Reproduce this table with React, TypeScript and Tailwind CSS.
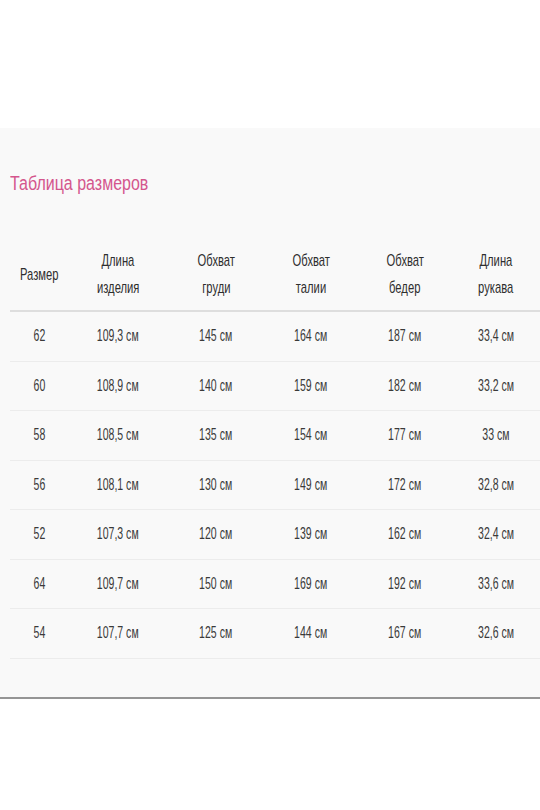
const headers = [
	["Размер"],
	["Длина", "изделия"],
	["Обхват", "груди"],
	["Обхват", "талии"],
	["Обхват", "бедер"],
	["Длина", "рукава"],
];

const rows = [
	["62", "109,3 см", "145 см", "164 см", "187 см", "33,4 см"],
	["60", "108,9 см", "140 см", "159 см", "182 см", "33,2 см"],
	["58", "108,5 см", "135 см", "154 см", "177 см", "33 см"],
	["56", "108,1 см", "130 см", "149 см", "172 см", "32,8 см"],
	["52", "107,3 см", "120 см", "139 см", "162 см", "32,4 см"],
	["64", "109,7 см", "150 см", "169 см", "192 см", "33,6 см"],
	["54", "107,7 см", "125 см", "144 см", "167 см", "32,6 см"],
];

const cols = "grid grid-cols-[58px_100px_96px_94px_94px_88px]";

export default function App() {
	return (
		<div className="w-[540px] h-[810px] bg-white overflow-hidden font-['Liberation_Sans',Arial,sans-serif]">
			<div className="h-[128px]" />
			<div className="h-[571px] bg-[#f9f9f9] border-b-2 border-[#959595] pl-[10px] pt-[43px]">
				<div className="h-[24px] leading-[24px] text-[20px] text-[#d4568d] origin-left scale-x-[0.8] whitespace-nowrap">
					Таблица размеров
				</div>
				{/* header */}
				<div className={`${cols} mt-[45px] h-[72px] border-b-2 border-[#dedede] text-[#2e2e2e]`}>
					{headers.map((h, i) => (
						<div key={i} className="flex flex-col items-center justify-center pb-[2px]">
							{h.map((line) => (
								<span key={line} className="block text-[17px] leading-[27px] scale-x-[0.66] whitespace-nowrap">
									{line}
								</span>
							))}
						</div>
					))}
				</div>
				{rows.map((r, i) => (
					<div key={i} className={`${cols} h-[49.5px] border-b border-[#ececec] text-[#3a3a3a]`}>
						{r.map((c, j) => (
							<div key={j} className="flex items-center justify-center">
								<span className="block text-[17px] leading-[20px] scale-x-[0.62] whitespace-nowrap">{c}</span>
							</div>
						))}
					</div>
				))}
			</div>
		</div>
	);
}
